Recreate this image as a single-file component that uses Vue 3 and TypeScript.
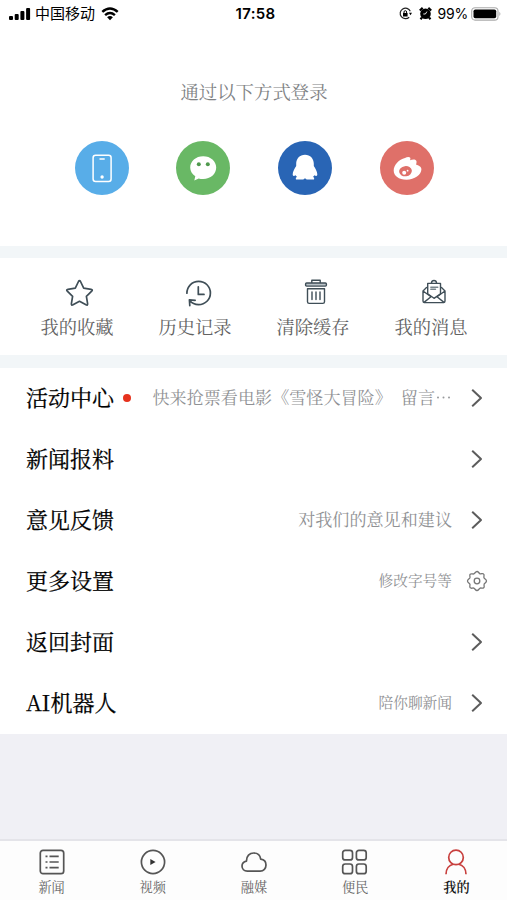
<script setup lang="ts">
interface LoginWay { id: string; color: string }
interface Shortcut { id: string; label: string }
interface MenuRow { label: string; detail?: string; extra?: string; dot?: boolean; small?: boolean; gear?: boolean }
interface Tab { id: string; label: string; active?: boolean }

const logins: LoginWay[] = [
  { id: 'phone', color: '#58ade8' },
  { id: 'wechat', color: '#69b865' },
  { id: 'qq', color: '#2965b5' },
  { id: 'weibo', color: '#df7069' },
]
const shortcuts: Shortcut[] = [
  { id: 'star', label: '我的收藏' },
  { id: 'history', label: '历史记录' },
  { id: 'trash', label: '清除缓存' },
  { id: 'mail', label: '我的消息' },
]
const rows: MenuRow[] = [
  { label: '活动中心', detail: '快来抢票看电影《雪怪大冒险》', extra: '留言', dot: true },
  { label: '新闻报料' },
  { label: '意见反馈', detail: '对我们的意见和建议' },
  { label: '更多设置', detail: '修改字号等', small: true, gear: true },
  { label: '返回封面' },
  { label: 'AI机器人', detail: '陪你聊新闻', small: true },
]
const tabs: Tab[] = [
  { id: 'news', label: '新闻' },
  { id: 'video', label: '视频' },
  { id: 'cloud', label: '融媒' },
  { id: 'grid', label: '便民' },
  { id: 'me', label: '我的', active: true },
]
</script>

<template>
  <div class="screen">
    <header class="status">
      <div class="carrier">
        <svg width="22" height="14" viewBox="0 0 22 14">
          <rect x="0" y="9" width="4" height="4" rx="1" />
          <rect x="5.7" y="7" width="4" height="6" rx="1" />
          <rect x="11.4" y="4" width="4" height="9" rx="1" />
          <rect x="17.1" y="1" width="4" height="12" rx="1" />
        </svg>
        <span class="operator">中国移动</span>
        <svg class="wifi" width="18" height="14" viewBox="0 0 18 14">
          <path d="M1.3 4.9Q9-1.9 16.7 4.9M4.1 8.1Q9 3.9 13.9 8.1" fill="none" stroke="#000" stroke-width="2.5" />
          <path d="M6.1 10.3Q9 7.9 11.9 10.3L9 13.3Z" />
        </svg>
      </div>
      <div class="time">17:58</div>
      <div class="power">
        <svg class="lock" width="13" height="13" viewBox="0 0 13 13">
          <path d="M11.3 4.2A5.3 5.3 0 1 0 10.2 10.2" fill="none" stroke="#222" stroke-width="1.2" />
          <path d="M10 5.8h3l-1.5 2.4zM4 6h4.6v3.4H4z" />
          <path d="M5 6V5a1.3 1.3 0 0 1 2.6 0v1" fill="none" stroke="#000" />
        </svg>
        <svg class="alarm" width="13" height="13" viewBox="0 0 13 13">
          <circle cx="6.5" cy="6.8" r="5.3" />
          <path d="M.8 3.5L3.7.9M12.2 3.5L9.3.9M3 10.5l-1.5 1.7M10 10.5l1.5 1.7" stroke="#000" stroke-width="2.2" />
          <path d="M7.9 4.6L6.4 7H4.3" fill="none" stroke="#fff" stroke-width=".9" />
        </svg>
        <span class="percent">99%</span>
        <svg width="31" height="14" viewBox="0 0 31 14">
          <rect x=".7" y=".7" width="26.3" height="12.4" rx="3.4" fill="#fff" stroke="#aaa" stroke-width="1.1" />
          <rect x="2.5" y="2.5" width="22.7" height="8.8" rx="1.8" />
          <path d="M28.4 4.8q2 2.1 0 4.2z" fill="#aaa" />
        </svg>
      </div>
    </header>

    <section class="login">
      <h1 class="login-title">通过以下方式登录</h1>
      <div class="login-list">
        <button v-for="way in logins" :key="way.id" class="login-btn" :style="{ backgroundColor: way.color }">
          <svg width="54" height="54" viewBox="0 0 54 54" fill="#fff">
            <g v-if="way.id === 'phone'">
              <rect x="18.1" y="14.2" width="18" height="26.4" rx="2.5" fill="none" stroke="#fff" stroke-width="1.5" />
              <path d="M24.5 18h5.2" stroke="#fff" stroke-width="1.5" />
              <circle cx="27.1" cy="36" r="1.7" />
            </g>
            <g v-else-if="way.id === 'wechat'">
              <path d="M27.2 15.2c7.4 0 13 4.9 13 11.4s-5.6 11.5-13 11.5c-1.9 0-3.3-.2-4.5-.7l-4.4 2 1-4.1c-3.1-2-5.1-5.1-5.1-8.7 0-6.5 5.6-11.4 13-11.4Z" />
              <circle cx="22.8" cy="23.2" r="2" fill="#4f994d" />
              <circle cx="31.8" cy="23.2" r="2" fill="#4f994d" />
            </g>
            <path v-else-if="way.id === 'qq'" d="M27 13.8c-5.3 0-8.8 3.9-8.8 9v2.1c-1.7 2.8-3.5 5.6-3.5 8.4 0 1.7 1 2.2 2.9 1 .4.8.9 1.4 1.6 1.8-1.4.3-1.6 1.2-1.2 2.3h7.3l1.7-1.2 1.7 1.2H36c.4-1.1.2-2-1.2-2.3.7-.4 1.2-1 1.6-1.8 1.9 1.2 2.9.7 2.9-1 0-2.8-1.8-5.6-3.5-8.4v-2.1c0-5.1-3.5-9-8.8-9Z" />
            <g v-else>
              <path d="M25 17c2-1.3 4.6-1.6 5.2-.2.4.8.1 1.7-.1 2.4 2-.9 5.2-1.3 6.2.5.7 1.3-.2 2.7-.1 4 2.3.5 5.2 1.7 5.2 4.6 0 5.4-6.8 10.5-14.9 10.5-7.8 0-12.8-3.9-12.8-9.2C13.7 24.2 19 18.2 25 17Z" />
              <ellipse cx="25.5" cy="30.2" rx="6.4" ry="5.1" transform="rotate(-8 25.5 30.2)" fill="#df7069" />
              <circle cx="24.2" cy="31.8" r="2" />
              <circle cx="27.6" cy="29.7" r=".9" />
            </g>
          </svg>
        </button>
      </div>
    </section>

    <section class="shortcuts">
      <button v-for="item in shortcuts" :key="item.id" class="shortcut">
        <svg class="shortcut-icon" width="30" height="30" viewBox="0 0 30 30">
          <path v-if="item.id === 'star'" d="M13.5 3.5Q14.5 1.7 15.5 3.5l3.2 6.7 7.4 1.1q2 .3.6 1.8l-5.3 5.2 1.2 7.4q.2 2-1.6 1.1L14.5 23.3l-6.5 3.5q-1.8.9-1.6-1.1l1.2-7.4-5.3-5.2q-1.4-1.5.6-1.8l7.4-1.1Z" />
          <g v-else-if="item.id === 'history'">
            <path d="M3.9 15.2C3.9 8.5 9 3.4 15.6 3.4c6.7 0 11.8 5.1 11.8 11.6s-5.2 11.6-11.8 11.6c-3.7 0-6.8-1.5-8.8-4.1M6.8 27.6l-.4-5.8 5.8.5" />
            <path d="M15.3 8.8v7.6h5.7" />
          </g>
          <g v-else-if="item.id === 'trash'" stroke-width="1.4">
            <path d="M10.8 4.8V2.2h8.4v2.6" />
            <rect x="4.6" y="5" width="20.8" height="3.1" rx="1" fill="#bac3c8" />
            <path d="M6.5 10.7h17v13q0 1.7-1.7 1.7H8.2q-1.7 0-1.7-1.7ZM11 14v7.5M15 14v7.5M19 14v7.5" />
          </g>
          <g v-else stroke-width="1.4">
            <path d="M7.5 9.5 4 13v10q0 1.6 1.6 1.6h18.8q1.6 0 1.6-1.6V13l-3.5-3.5M4 13l8 5.8L5 24.4M26 13l-8 5.8 7 5.6" />
            <path d="M12.4 5q.3-2.5 2.6-2.5T17.6 5M8.7 15.8V5.4h12.8v10.4L15 20.3Z" />
            <path d="M11.8 9.3h7M11.8 11.3h4.7" stroke="#78858c" />
          </g>
        </svg>
        <span class="shortcut-label">{{ item.label }}</span>
      </button>
    </section>

    <nav class="menu">
      <div v-for="row in rows" :key="row.label" class="row">
        <span class="row-label">{{ row.label }}</span>
        <i v-if="row.dot" class="dot"></i>
        <span class="detail" :class="{ small: row.small }">{{ row.detail }}<span v-if="row.extra" class="extra">{{ row.extra }}<svg class="ellipsis" width="17" height="17" viewBox="0 0 17 17"><circle cx="3" cy="8.5" r="1" /><circle cx="8.5" cy="8.5" r="1" /><circle cx="14" cy="8.5" r="1" /></svg></span></span>
        <svg class="row-icon" width="22" height="22" viewBox="0 0 22 22">
          <g v-if="row.gear" stroke="#777" stroke-width="1.3">
            <path d="M11 1.5C12.5 1.5 13 3.5 14.2 3.8C15.5 4.1 16.7 2.8 17.7 4.1C18.7 5.3 17.4 6.5 18 7.8C18.4 9 20.5 9.4 20.5 11C20.5 12.5 18.5 13 18.1 14.2C17.6 15.5 19 16.7 17.7 17.8C16.5 18.9 15.4 17.6 14.2 18.1C13 18.6 12.5 20.5 11 20.5S9 18.6 7.8 18.1C6.5 17.6 5.3 19 4.2 17.7C3.1 16.5 4.4 15.4 3.9 14.2C3.4 13 1.5 12.5 1.5 11S3.4 9 3.9 7.8C4.4 6.5 3.1 5.3 4.2 4.2C5.3 3.1 6.5 4.4 7.8 3.9C9 3.4 9.5 1.5 11 1.5Z" />
            <circle cx="11" cy="11" r="2.8" />
          </g>
          <path v-else d="m6.2 2.7 8.8 8.3-8.8 8.3" stroke="#5c5c5c" stroke-width="2" />
        </svg>
      </div>
    </nav>

    <footer class="tabbar">
      <button v-for="tab in tabs" :key="tab.id" class="tab" :class="{ active: tab.active }">
        <svg width="28" height="28" viewBox="0 0 28 28">
          <g v-if="tab.id === 'news'">
            <rect x="2.3" y="2.3" width="23.4" height="23.4" rx="2.7" />
            <path d="M11.5 8.4h9.2M11.5 14h9.2M11.5 19.6h9.2M7.5 8.4h2M7.5 14h2M7.5 19.6h2" />
          </g>
          <g v-else-if="tab.id === 'video'">
            <circle cx="14" cy="14" r="11.6" />
            <path d="m11.3 11 5.3 3-5.3 3Z" fill="#333" stroke="none" />
          </g>
          <path v-else-if="tab.id === 'cloud'" d="M7.3 23.2C4.1 23.2 2 21 2 18.1c0-2.7 1.9-4.5 4.5-5C6.4 8.1 9.5 5 13.8 5c3.8 0 6.4 2.4 6.9 6.1 3.2.3 5.3 2.7 5.3 5.9 0 3.4-2.4 6.2-5.8 6.2Z" />
          <g v-else-if="tab.id === 'grid'">
            <rect x="1.7" y="2.3" width="9.8" height="9.6" rx="2.5" />
            <rect x="15.4" y="2.3" width="9.8" height="9.6" rx="2.5" />
            <rect x="1.7" y="16" width="9.8" height="9.7" rx="2.5" />
            <rect x="15.4" y="16" width="9.8" height="9.7" rx="2.5" />
          </g>
          <g v-else>
            <circle cx="14" cy="9.4" r="7.3" />
            <path d="M4 26.2c0-5.2 3.2-9 7.2-10M24 26.2c0-5.2-3.2-9-7.2-10" />
          </g>
        </svg>
        <span class="tab-label">{{ tab.label }}</span>
      </button>
    </footer>
  </div>
</template>

<style>
body { background: #f0f0f5; overflow: hidden; }
</style>

<style scoped>
* { box-sizing: border-box; }
.screen {
  height: 900px;
  display: flex;
  flex-direction: column;
  background: #f0f0f5;
  font-family: "Noto Serif CJK SC", "Noto Serif SC", "Liberation Serif", "Noto Sans CJK SC", serif;
}
button { border: 0; padding: 0; background: none; font: inherit; }
svg { display: block; flex: none; }
.status {
  height: 27px;
  display: grid;
  grid-template-columns: 1fr auto 1fr;
  align-items: center;
  padding: 0 5px 0 9px;
  background: #fff;
  font-family: Inter, "Noto Sans CJK SC", sans-serif;
  line-height: 27px;
}
.carrier, .power { display: flex; align-items: center; }
.power { justify-content: flex-end; }
.operator { font-size: 15px; margin-left: 4px; }
.wifi { margin-left: 6px; }
.time { font-size: 15px; font-weight: 600; letter-spacing: .3px; padding-left: 0; margin-left: -3px; margin-right: -3px; }
.alarm { margin-left: 7px; }
.percent { font-size: 14px; letter-spacing: -.2px; margin: 0 3px 0 5px; }
.login { height: 219px; padding-top: 50px; background: #fff; }
.login-title {
  margin: 0 0 0 1px;
  text-align: center;
  font-size: 18.4px;
  font-weight: 400;
  line-height: 28px;
  color: #808284;
}
.login-list { display: flex; justify-content: space-between; padding: 36px 73px 0 74.5px; }
.login-btn { width: 54px; height: 54px; border-radius: 50%; }
.shortcuts {
  height: 122px;
  padding: 0 17px 0 18px;
  display: grid;
  grid-template-columns: repeat(4, 1fr);
  background: #fff;
  border: solid #f2f6f8;
  border-width: 12px 0 13px;
}
.shortcut { display: flex; flex-direction: column; align-items: center; padding-top: 20px; }
.shortcut-icon { fill: none; stroke: #3f4e57; stroke-width: 1.7; stroke-linecap: round; stroke-linejoin: round; margin-left: 5px; }
.shortcut-label { font-size: 18.3px; line-height: 28px; margin-top: 4px; color: #626262; white-space: nowrap; }
.menu { background: #fff; height: 366px; }
.row { height: 61px; display: flex; align-items: center; padding: 0 19px 2px 26px; }
.row-label { font-size: 22px; line-height: 30px; padding-bottom: 2px; color: #000; -webkit-text-stroke: .25px #000; white-space: nowrap; }
.dot { width: 8px; height: 8px; border-radius: 50%; background: #e6321d; margin-left: 9px; }
.detail { margin-left: auto; font-size: 17.1px; line-height: 26px; padding-bottom: 1px; color: #8f9194; white-space: nowrap; display: flex; align-items: center; }
.detail.small { font-size: 14.7px; }
.extra { margin-left: 9px; display: flex; align-items: center; }
.ellipsis { fill: #97999c; }
.row-icon { margin-left: 14px; margin-right: -1px; fill: none; stroke-linejoin: round; }
.row-icon { margin-right: 0; }
.tabbar {
  height: 61px;
  margin-top: auto;
  padding-left: 1px;
  display: grid;
  grid-template-columns: repeat(5, 1fr);
  background: #fdfdfd;
  border-top: 2px solid #e4e4e9;
}
.tab { display: flex; flex-direction: column; align-items: center; padding-top: 7px; color: #666; }
.tab svg { fill: none; stroke: #555; stroke-width: 1.7; stroke-linejoin: round; }
.tab.active svg { stroke: #c8403e; }
.tab-label { font-size: 13.2px; line-height: 20px; margin-top: 1px; }
.tab.active { color: #111; font-weight: 600; }
</style>
